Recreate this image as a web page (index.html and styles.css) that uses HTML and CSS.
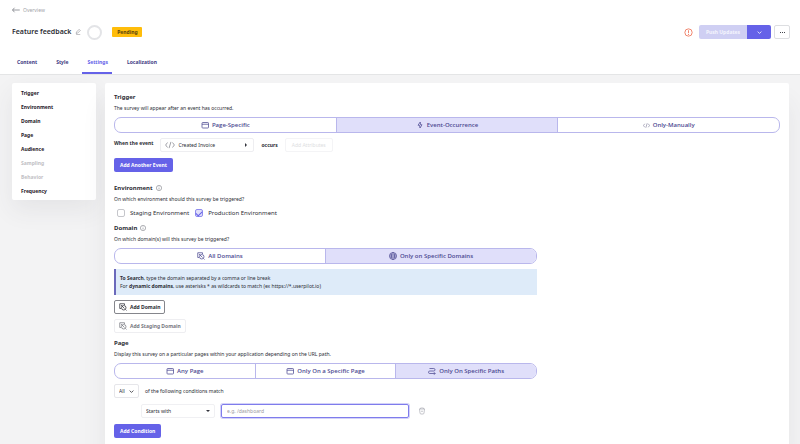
FILE: index.html
```html
<!DOCTYPE html>
<html lang="en">

<head>
    <meta charset="UTF-8">
    <meta name="viewport" content="width=device-width, initial-scale=1.0">
    <title>Feature feedback - Settings</title>
    <link rel="stylesheet" href="styles.css">
</head>

<body>
    <!-- Shared icons -->
    <svg class="sprite" aria-hidden="true">
        <symbol id="icon-window" viewBox="0 0 16 16"><rect x="2" y="3" width="13" height="11" rx="1.5"/><path d="M2 6.500h13"/></symbol>
        <symbol id="icon-bolt" viewBox="0 0 16 16"><path d="M8.5 2L4 8.500h3l1 5.500L12 7.500H9z"/></symbol>
        <symbol id="icon-code" viewBox="0 0 16 16"><path d="M4 4L1 8l3 4M12 4l3 4-3 4M9.5 3l-3 10"/></symbol>
        <symbol id="icon-domains" viewBox="0 0 16 16"><path d="M11 4V1.5H1.5V11H4M4 4l7 7"/><circle cx="9.5" cy="9.5" r="4.5"/><path d="M13 13l2 2"/></symbol>
        <symbol id="icon-globe" viewBox="0 0 16 16"><circle cx="8" cy="8" r="7"/><ellipse cx="8" cy="8" rx="3" ry="7"/><path d="M1.5 6h13M1.5 10h13"/></symbol>
        <symbol id="icon-route" viewBox="0 0 16 16"><path d="M3 3h8.5a2.500 2.500 0 0 1 0 5h-8a2.500 2.500 0 0 0 0 5H14M12 10.5l2.500 2.500-2.500 2.500"/></symbol>
        <symbol id="icon-info" viewBox="0 0 16 16"><circle cx="8" cy="8" r="7"/><path d="M8 7v5M8 4v1.5"/></symbol>
        <symbol id="icon-chevron" viewBox="0 0 16 16"><path d="M2 5l6 6 6-6"/></symbol>
    </svg>

    <header class="header">
        <a class="back" href="#">
            <svg class="icon-arrow" viewBox="0 0 16 12"><path d="M15.5 6H1M5 1.5L1 6l4 4.5"/></svg>
            Overview
        </a>
        <div class="title-row">
            <h1>Feature feedback</h1>
            <button class="edit" aria-label="Rename">
                <svg class="icon" viewBox="0 0 16 16"><path d="M3 12l1-4 7-7 3 3-7 7zM3 15h11"/></svg>
            </button>
            <span class="ring"></span>
            <span class="status">Pending</span>
            <div class="actions">
                <svg class="icon-alert" viewBox="0 0 16 16"><circle cx="8" cy="8" r="6.5"/><path d="M8 4v5M8 10.5v2"/></svg>
                <div class="push">
                    <button class="push-main" disabled>Push Updates</button>
                    <button class="push-more" aria-label="Push options"><svg class="icon-small"><use href="#icon-chevron"/></svg></button>
                </div>
                <button class="more" aria-label="More"><i></i><i></i><i></i></button>
            </div>
        </div>
        <nav class="tabs">
            <a href="#">Content</a>
            <a href="#">Style</a>
            <a class="active" href="#">Settings</a>
            <a href="#">Localization</a>
        </nav>
    </header>

    <div class="layout">
        <nav class="sidebar">
            <a href="#trigger">Trigger</a>
            <a href="#environment">Environment</a>
            <a href="#domain">Domain</a>
            <a href="#page">Page</a>
            <a href="#audience">Audience</a>
            <a class="off" href="#sampling">Sampling</a>
            <a class="off" href="#behavior">Behavior</a>
            <a href="#frequency">Frequency</a>
        </nav>

        <main class="card">
            <section id="trigger">
                <h2>Trigger</h2>
                <p>The survey will appear after an event has occurred.</p>
                <div class="segments">
                    <button><svg class="icon"><use href="#icon-window"/></svg>Page-Specific</button>
                    <button class="selected"><svg class="icon"><use href="#icon-bolt"/></svg>Event-Occurrence</button>
                    <button><svg class="icon-tag"><use href="#icon-code"/></svg>Only-Manually</button>
                </div>
                <div class="event-row">
                    <span class="strong">When the event</span>
                    <button class="event-picker">
                        <svg class="icon-code"><use href="#icon-code"/></svg>
                        Created Invoice
                        <span class="caret-right"></span>
                    </button>
                    <span class="strong occurs">occurs</span>
                    <button class="attributes" disabled>Add Attributes</button>
                </div>
                <button class="primary">Add Another Event</button>
            </section>

            <section id="environment" class="environment">
                <h2>Environment <svg class="icon-info"><use href="#icon-info"/></svg></h2>
                <p>On which environment should this survey be triggered?</p>
                <div class="checks">
                    <label><input type="checkbox">Staging Environment</label>
                    <label><input type="checkbox" checked>Production Environment</label>
                </div>
            </section>

            <section id="domain" class="narrow">
                <h2>Domain <svg class="icon-info"><use href="#icon-info"/></svg></h2>
                <p>On which domain(s) will this survey be triggered?</p>
                <div class="segments">
                    <button><svg class="icon"><use href="#icon-domains"/></svg>All Domains</button>
                    <button class="selected"><svg class="icon"><use href="#icon-globe"/></svg>Only on Specific Domains</button>
                </div>
                <div class="note">
                    <b>To Search</b>, type the domain separated by a comma or line break<br>
                    For <b>dynamic domains</b>, use asterisks * as wildcards to match (ex https://*.userpilot.io)
                </div>
                <button class="outline"><svg class="icon"><use href="#icon-domains"/></svg>Add Domain</button>
                <button class="outline light"><svg class="icon"><use href="#icon-domains"/></svg>Add Staging Domain</button>
            </section>

            <section id="page" class="narrow">
                <h2>Page</h2>
                <p>Display this survey on a particular pages within your application depending on the URL path.</p>
                <div class="segments">
                    <button><svg class="icon"><use href="#icon-window"/></svg>Any Page</button>
                    <button><svg class="icon"><use href="#icon-window"/></svg>Only On a Specific Page</button>
                    <button class="selected"><svg class="icon"><use href="#icon-route"/></svg>Only On Specific Paths</button>
                </div>
                <div class="match-row">
                    <span class="select-box">
                        <select id="match" aria-label="Match conditions"><option>All</option><option>Any</option></select>
                        <svg class="icon-small"><use href="#icon-chevron"/></svg>
                    </span>
                    <label for="match">of the following conditions match</label>
                </div>
                <div class="condition">
                    <span class="select-box operator">
                        <select aria-label="Operator"><option>Starts with</option><option>Contains</option></select>
                        <span class="caret-down"></span>
                    </span>
                    <input class="path" type="text" placeholder="e.g. /dashboard" aria-label="Path">
                    <button class="delete" aria-label="Delete condition">
                        <svg class="icon" viewBox="0 0 16 16"><path d="M2 4h12M3 4l1 8a2 2 0 0 0 2 2h4a2 2 0 0 0 2-2l1-8M5 4V2h6v2M6 8.500h4"/></svg>
                    </button>
                </div>
                <button class="primary">Add Condition</button>
            </section>
        </main>
    </div>
</body>

</html>
```
FILE: styles.css
```css
* {
    margin: 0;
    padding: 0;
    box-sizing: border-box;
}

body {
    display: flex;
    flex-direction: column;
    min-height: 100vh;
    background: #f3f3f4;
    color: #2c2d35;
    font-family: "Noto Sans", "Open Sans", sans-serif;
    font-size: 5px;
    line-height: 10px;
}

button,
input,
select {
    font: inherit;
    color: inherit;
    background: none;
    border: none;
}

a {
    color: inherit;
    text-decoration: none;
}

svg {
    flex: none;
    fill: none;
    stroke: currentColor;
    stroke-width: 1.5;
}

.sprite {
    position: absolute;
    width: 0;
    height: 0;
}

.icon {
    width: 8px;
    height: 8px;
}

.icon-small {
    width: 5px;
    height: 5px;
    stroke-width: 2.5;
}

/* Header */
.header {
    padding: 5px 10px 0 12px;
    background: #fff;
    border-bottom: 1px solid #e4e5e6;
}

.back {
    display: flex;
    align-items: center;
    gap: 3px;
    color: #a2a3a8;
}

.icon-arrow {
    width: 8px;
    height: 6px;
    color: #777980;
}

.title-row {
    display: flex;
    align-items: center;
    height: 18px;
    margin-top: 8px;
}

h1 {
    font-size: 7px;
    font-weight: 600;
}

.edit {
    display: flex;
    margin-left: 4px;
    color: #85868c;
}

.edit .icon {
    width: 6px;
    height: 6px;
}

.ring {
    width: 15px;
    height: 15px;
    margin-left: 6px;
    border: 2px solid #e3e4e7;
    border-radius: 50%;
}

.status {
    width: 30px;
    margin-left: 10px;
    background: #ffbd0a;
    border-radius: 1px;
    color: #59430c;
    font-weight: 700;
    text-align: center;
}

.actions {
    display: flex;
    align-items: center;
    gap: 3px;
    margin-left: auto;
}

.icon-alert {
    width: 9px;
    height: 9px;
    margin-right: 3px;
    color: #ee7257;
}

.push {
    display: flex;
    height: 14px;
    border-radius: 2px;
    overflow: hidden;
}

.push-main {
    width: 48px;
    background: #cfcff3;
    color: #f4f4fd;
    font-weight: 700;
}

.push-more {
    display: flex;
    align-items: center;
    justify-content: center;
    width: 24px;
    background: #6562e8;
    color: #fff;
}

.more {
    display: flex;
    align-items: center;
    justify-content: center;
    gap: 1px;
    width: 16px;
    height: 14px;
    border: 1px solid #dddee1;
    border-radius: 2px;
}

.more i {
    width: 1px;
    height: 1px;
    background: #44454d;
}

.tabs {
    display: flex;
    gap: 10px;
    margin-top: 12px;
    color: #3e3b83;
    font-weight: 700;
}

.tabs a {
    padding: 4px 4px 5px 5px;
    border-bottom: 2px solid transparent;
}

.tabs .active {
    border-color: #6562e8;
    color: #6562e8;
}

/* Page body */
.layout {
    display: flex;
    flex: 1;
    align-items: flex-start;
    gap: 9px;
    padding: 8px 11px 0 12px;
}

.sidebar {
    display: flex;
    flex-direction: column;
    gap: 4px;
    width: 84px;
    padding: 5px 9px 4px;
    background: #fff;
    border-radius: 2px;
    box-shadow: 0 10px 24px rgba(60, 70, 80, 0.08);
    color: #1f2028;
    font-weight: 700;
}

.sidebar .off {
    color: #bfc0c4;
}

.card {
    display: flex;
    flex: 1;
    flex-direction: column;
    align-self: stretch;
    gap: 10px;
    padding: 9px 9px 5px;
    background: #fff;
    border-radius: 2px 2px 0 0;
    box-shadow: 0 20px 24px rgba(60, 70, 80, 0.08);
}

section {
    display: flex;
    flex-direction: column;
    align-items: flex-start;
}

.environment {
    margin: 1px 0 -5px;
}

.narrow {
    width: 423px;
    max-width: 100%;
}

.narrow + .narrow {
    margin-top: -5px;
}

h2 {
    display: flex;
    align-items: center;
    gap: 3px;
    margin-bottom: 1px;
    font-size: 6px;
    font-weight: 700;
}

.icon-info {
    width: 6px;
    height: 6px;
    color: #777980;
}

.segments {
    display: flex;
    align-self: stretch;
    height: 16px;
    margin: 4px 0 5px;
    border: 1px solid #b9b7ec;
    border-radius: 7px;
    overflow: hidden;
    color: #4c4991;
    font-family: "Open Sans", "Noto Sans", sans-serif;
    font-size: 6px;
    font-weight: 600;
}

.segments button {
    display: flex;
    flex: 1;
    align-items: center;
    justify-content: center;
    gap: 3px;
}

.segments button + button {
    border-left: 1px solid #b9b7ec;
}

.segments .selected {
    background: #e0dffa;
}

.icon-tag {
    width: 7px;
    height: 7px;
    color: #85839f;
}

.strong {
    font-weight: 700;
}

.primary {
    height: 14px;
    padding: 0 6px;
    background: #6562e8;
    border-radius: 2px;
    color: #fff;
    font-weight: 700;
}

/* Trigger */
.event-row {
    display: flex;
    gap: 7px;
    margin-bottom: 6px;
}

.event-picker {
    display: flex;
    align-items: center;
    gap: 3px;
    width: 94px;
    height: 14px;
    padding: 0 6px 0 4px;
    border: 1px solid #eeeef1;
    border-radius: 2px;
}

.icon-code {
    width: 10px;
    height: 10px;
    color: #9a9ba2;
}

.caret-right {
    margin-left: auto;
    border: 2px solid transparent;
    border-left-color: #33343c;
    border-right: none;
}

.occurs {
    align-self: center;
}

.attributes {
    height: 14px;
    padding: 0 6px;
    border: 1px solid #f4f4f6;
    border-radius: 2px;
    color: #dddee1;
}

/* Environment */
.checks {
    display: flex;
    gap: 6px;
    padding: 4px 3px 0;
    font-size: 6px;
}

.checks label {
    display: flex;
    align-items: center;
    gap: 5px;
}

.checks input {
    display: grid;
    justify-content: center;
    width: 8px;
    height: 8px;
    border: 1px solid #c5c6cb;
    border-radius: 2px;
    appearance: none;
}

.checks input:checked {
    background: #e0dffa;
    border-color: #8f8ced;
}

.checks input:checked::before {
    content: "";
    width: 3px;
    height: 5px;
    border: solid #6562e8;
    border-width: 0 1px 1px 0;
    transform: rotate(45deg);
}

/* Domain */
.note {
    align-self: stretch;
    margin-bottom: 5px;
    padding: 5px 4px;
    background: #deebf9;
    border-left: 2px solid #6b69bb;
    line-height: 8px;
}

.outline {
    display: flex;
    align-items: center;
    gap: 3px;
    height: 14px;
    padding: 0 4px;
    border: 1px solid #85868c;
    border-radius: 2px;
    font-weight: 700;
}

.light {
    margin-top: 5px;
    border-color: #eeeef1;
    color: #77787f;
}

/* Page conditions */
.match-row,
.condition {
    display: flex;
    align-items: center;
    gap: 6px;
    margin-bottom: 6px;
}

.select-box {
    display: flex;
    align-items: center;
    width: 25px;
    height: 14px;
    padding: 0 4px;
    border: 1px solid #e6e6ea;
    border-radius: 2px;
}

.select-box select {
    flex: 1;
    min-width: 0;
    appearance: none;
}

.condition {
    align-self: stretch;
    padding-left: 27px;
}

.operator {
    width: 74px;
    border-color: #f0f0f3;
}

.caret-down {
    border: 2px solid transparent;
    border-top-color: #33343c;
    border-bottom: none;
}

.path {
    width: 188px;
    height: 14px;
    padding: 0 5px;
    border: 1px solid #7f7cec;
    border-radius: 2px;
    box-shadow: 0 0 0 1px #d3d2f8;
    outline: none;
}

.path::placeholder {
    color: #9a9ba2;
}

.delete {
    display: flex;
    margin-left: 3px;
    color: #b0b1b9;
}
```
